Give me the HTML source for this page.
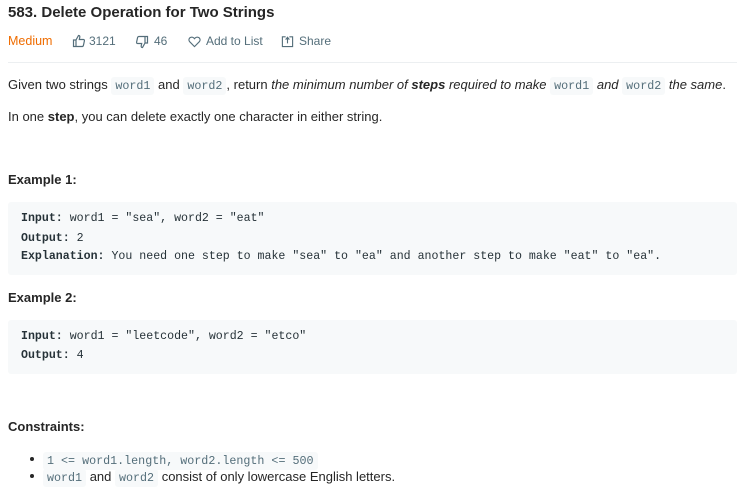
<!DOCTYPE html>
<html><head><style>
body{margin:0;background:#fff;font-family:"Liberation Sans",sans-serif;color:#262626;width:747px;height:488px;overflow:hidden;position:relative}
.a{position:absolute;white-space:nowrap}
.t{font-size:15px;font-weight:bold;color:#262626}
.p{font-size:13px;color:#262626}
code{font-family:"Liberation Mono",monospace;font-size:11.7px;color:#546e7a;background:#f7f9fa;border-radius:3px;padding:2px 4px}
.pre{position:absolute;left:8px;width:729px;background:#f7f9fa;border-radius:3px}
.m{font-family:"Liberation Mono",monospace;font-size:11.6px;color:#263238;position:absolute;left:13px;white-space:nowrap}
.meta{font-size:12px;color:#546e7a;top:34px}
</style></head><body>
<div class="a t" style="left:8px;top:4px">583. Delete Operation for Two Strings</div>
<div class="a" style="left:8px;top:34px;font-size:12.5px;color:#ef6c00">Medium</div>
<svg class="a" style="left:72px;top:34px" width="14" height="14" viewBox="0 0 14 14" fill="none" stroke="#546e7a" stroke-width="1.2"><path d="M1.5 6h2.5v6.5H1.5zM4 6l2.5-4.5c1 0 1.5.6 1.3 1.6L7.3 5.5h4c.8 0 1.3.6 1.1 1.4l-1 4.6c-.2.6-.6 1-1.2 1H4"/></svg>
<div class="a meta" style="left:89px">3121</div>
<svg class="a" style="left:135px;top:35px" width="14" height="14" viewBox="0 0 14 14" fill="none" stroke="#546e7a" stroke-width="1.2"><path d="M12.5 8H10V1.5h2.5zM10 8l-2.5 4.5c-1 0-1.5-.6-1.3-1.6L6.7 8.5h-4c-.8 0-1.3-.6-1.1-1.4l1-4.6c.2-.6.6-1 1.2-1H10"/></svg>
<div class="a meta" style="left:154px">46</div>
<svg class="a" style="left:188px;top:35px" width="13" height="13" viewBox="0 0 14 14" fill="none" stroke="#546e7a" stroke-width="1.2"><path d="M7 12.5L1.8 7.2C.3 5.6 1 2.5 3.8 2.3 5.2 2.2 6.3 3 7 4c.7-1 1.8-1.8 3.2-1.7 2.8.2 3.5 3.3 2 4.9z"/></svg>
<div class="a meta" style="left:206px">Add to List</div>
<svg class="a" style="left:281px;top:35px" width="13" height="13" viewBox="0 0 14 14" fill="none" stroke="#546e7a" stroke-width="1.2"><path d="M5 2H1.5v10.5h11V2H9M7 9V3M5 5l2-2.5L9 5"/></svg>
<div class="a meta" style="left:299px">Share</div>
<div class="a" style="left:8px;top:62px;width:729px;height:1px;background:#eceff1"></div>
<div class="a p" style="left:8px;top:77px">Given two strings <code>word1</code> and <code>word2</code>, return <i>the minimum number of <b>steps</b> required to make</i> <code>word1</code> <i>and</i> <code>word2</code> <i>the same</i>.</div>
<div class="a p" style="left:8px;top:109px">In one <b>step</b>, you can delete exactly one character in either string.</div>
<div class="a p" style="left:8px;top:172px;font-weight:bold">Example 1:</div>
<div class="pre" style="top:202px;height:73px">
<div class="m" style="top:10px"><b>Input:</b> word1 = "sea", word2 = "eat"</div>
<div class="m" style="top:30px"><b>Output:</b> 2</div>
<div class="m" style="top:48px"><b>Explanation:</b> You need one step to make "sea" to "ea" and another step to make "eat" to "ea".</div>
</div>
<div class="a p" style="left:8px;top:290px;font-weight:bold">Example 2:</div>
<div class="pre" style="top:320px;height:54px">
<div class="m" style="top:10px"><b>Input:</b> word1 = "leetcode", word2 = "etco"</div>
<div class="m" style="top:29px"><b>Output:</b> 4</div>
</div>
<div class="a p" style="left:8px;top:419px;font-weight:bold">Constraints:</div>
<div class="a" style="left:30px;top:457px;width:4px;height:4px;border-radius:50%;background:#262626"></div>
<div class="a p" style="left:43px;top:452px"><code>1 &lt;= word1.length, word2.length &lt;= 500</code></div>
<div class="a" style="left:30px;top:474px;width:4px;height:4px;border-radius:50%;background:#262626"></div>
<div class="a p" style="left:43px;top:469px"><code>word1</code> and <code>word2</code> consist of only lowercase English letters.</div>
</body></html>
